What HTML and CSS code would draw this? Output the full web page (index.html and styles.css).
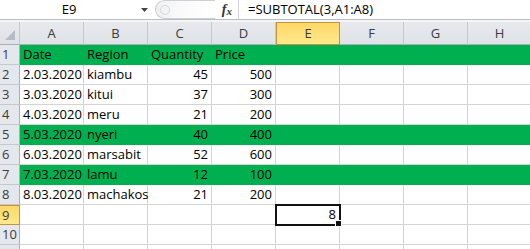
FILE: index.html
```html
<!DOCTYPE html>
<html lang="en">
<head>
    <meta charset="UTF-8">
    <meta name="viewport" content="width=device-width, initial-scale=1.0">
    <title>Book1 - Sheet1</title>
    <link rel="stylesheet" href="styles.css">
</head>
<body>
    <div class="formula-bar">
        <div class="name-box">E9</div>
        <div class="name-drop">
            <svg width="7" height="4" viewBox="0 0 7 4"><path d="M0 0h7L3.5 4z" fill="#444"/></svg>
        </div>
        <div class="fx-box">
            <div class="pill"><span class="grip"></span></div>
            <span class="fx">f<span class="fx-x">x</span></span>
        </div>
        <div class="formula">=SUBTOTAL(3,A1:A8)</div>
    </div>
    <div class="bar-gap"></div>

    <table class="sheet">
        <colgroup>
            <col class="col-head">
            <col><col><col><col><col><col><col><col>
        </colgroup>
        <thead>
            <tr>
                <th class="corner"><span class="corner-tri"></span></th>
                <th>A</th><th>B</th><th>C</th><th>D</th>
                <th class="active">E</th><th>F</th><th>G</th><th>H</th>
            </tr>
        </thead>
        <tbody>
            <tr class="green">
                <th>1</th><td>Date</td><td>Region</td><td>Quantity</td><td>Price</td>
                <td></td><td></td><td></td><td></td>
            </tr>
            <tr>
                <th>2</th><td>2.03.2020</td><td>kiambu</td><td class="num">45</td><td class="num">500</td>
                <td></td><td></td><td></td><td></td>
            </tr>
            <tr>
                <th>3</th><td>3.03.2020</td><td>kitui</td><td class="num">37</td><td class="num">300</td>
                <td></td><td></td><td></td><td></td>
            </tr>
            <tr>
                <th>4</th><td>4.03.2020</td><td>meru</td><td class="num">21</td><td class="num">200</td>
                <td></td><td></td><td></td><td></td>
            </tr>
            <tr class="green">
                <th>5</th><td>5.03.2020</td><td>nyeri</td><td class="num">40</td><td class="num">400</td>
                <td></td><td></td><td></td><td></td>
            </tr>
            <tr>
                <th>6</th><td>6.03.2020</td><td>marsabit</td><td class="num">52</td><td class="num">600</td>
                <td></td><td></td><td></td><td></td>
            </tr>
            <tr class="green">
                <th>7</th><td>7.03.2020</td><td>lamu</td><td class="num">12</td><td class="num">100</td>
                <td></td><td></td><td></td><td></td>
            </tr>
            <tr>
                <th>8</th><td>8.03.2020</td><td>machakos</td><td class="num">21</td><td class="num">200</td>
                <td></td><td></td><td></td><td></td>
            </tr>
            <tr>
                <th class="active">9</th><td></td><td></td><td></td><td></td>
                <td class="num selected">8<span class="fill-handle"></span></td><td></td><td></td><td></td>
            </tr>
            <tr>
                <th>10</th><td></td><td></td><td></td><td></td>
                <td></td><td></td><td></td><td></td>
            </tr>
            <!-- next row only peeks in at the bottom edge -->
            <tr>
                <th></th><td></td><td></td><td></td><td></td>
                <td></td><td></td><td></td><td></td>
            </tr>
        </tbody>
    </table>
</body>
</html>
```

FILE: styles.css
```css
* {
    margin: 0;
    padding: 0;
    box-sizing: border-box;
}

body {
    font-family: 'Open Sans', 'Liberation Sans', sans-serif;
    font-size: 13px;
    color: #000;
    background: #fff;
    width: 530px;
    height: 249px;
    overflow: hidden;
}

/* formula bar */
.formula-bar {
    display: flex;
    height: 20px;
    border-bottom: 1px solid #b9bcc1;
    background: #fff;
}

.name-box {
    width: 138px;
    line-height: 19px;
    text-align: center;
}

.name-drop {
    width: 14px;
    display: flex;
    align-items: center;
    padding-left: 3px;
    padding-top: 1px;
}

.fx-box {
    position: relative;
    width: 84px;
    margin-left: 3px;
    border-right: 1px solid #d2d4d8;
}

.pill {
    position: absolute;
    left: 0;
    top: 0;
    bottom: 0;
    width: 60px;
    border: 1px solid #cdd0d4;
    border-right: none;
    border-radius: 10px 0 0 10px;
    background: linear-gradient(90deg, #eef0f2 0%, #fafafa 40%, #fff 100%);
}

.grip {
    position: absolute;
    left: 4px;
    top: 4px;
    width: 10px;
    height: 10px;
    border-radius: 50%;
    border: 1px solid #d6d8db;
    background: #f3f4f5;
}

.fx {
    position: absolute;
    right: 6px;
    top: 0;
    line-height: 19px;
    font-family: 'Liberation Serif', serif;
    font-style: italic;
    font-weight: bold;
    font-size: 14px;
    color: #333;
}

.fx-x {
    font-size: 11px;
    position: relative;
    top: 1px;
}

.formula {
    padding-left: 9px;
    line-height: 19px;
}

.bar-gap {
    height: 2px;
    background: #f4f5f7;
}

/* grid */
.sheet {
    border-collapse: separate;
    border-spacing: 0;
    table-layout: fixed;
    width: 532px;
}

.sheet col {
    width: 64px;
}

.sheet col.col-head {
    width: 20px;
}

.sheet thead th {
    height: 22px;
    font-weight: normal;
    color: #3b3b3b;
    background: linear-gradient(#e7e9ed, #dfe2e7);
    border-right: 1px solid #c5c9cf;
    border-bottom: 1px solid #a9b0b8;
    text-align: center;
    line-height: 21px;
}

.sheet thead th.active {
    background: linear-gradient(#fdd866, #ffe98d);
    border: 1px solid #c8923a;
    color: #3b3b3b;
}

.corner {
    position: relative;
}

.corner-tri {
    position: absolute;
    right: 4px;
    bottom: 4px;
    width: 0;
    height: 0;
    border-left: 10px solid transparent;
    border-bottom: 10px solid #b7bcc3;
}

.sheet tbody th {
    height: 20px;
    font-weight: normal;
    color: #3b3b3b;
    background: #e4e7eb;
    border-right: 1px solid #a9b0b8;
    border-bottom: 1px solid #c5c9cf;
    text-align: left;
    padding-left: 2px;
    line-height: 19px;
    white-space: nowrap;
}

.sheet tbody th.active {
    background: linear-gradient(#fdd866, #ffe98d);
    border-right-color: #c8923a;
    border-bottom: 1px solid #c8923a;
    border-top: 1px solid #c8923a;
    line-height: 18px;
}

.sheet td {
    height: 20px;
    border-right: 1px solid #d4d4d4;
    border-bottom: 1px solid #d4d4d4;
    padding: 0 3px;
    line-height: 19px;
    white-space: nowrap;
    overflow: visible;
}

.sheet td.num {
    text-align: right;
    padding-right: 3px;
}

.sheet tr.green td {
    background: #00b050;
    border-color: #00b050;
}

/* active cell */
.sheet td.selected {
    position: relative;
    outline: 2px solid #111;
    outline-offset: -1px;
}

.fill-handle {
    position: absolute;
    right: -3px;
    bottom: -3px;
    width: 5px;
    height: 5px;
    background: #111;
    border: 1px solid #fff;
    box-sizing: content-box;
}
```
